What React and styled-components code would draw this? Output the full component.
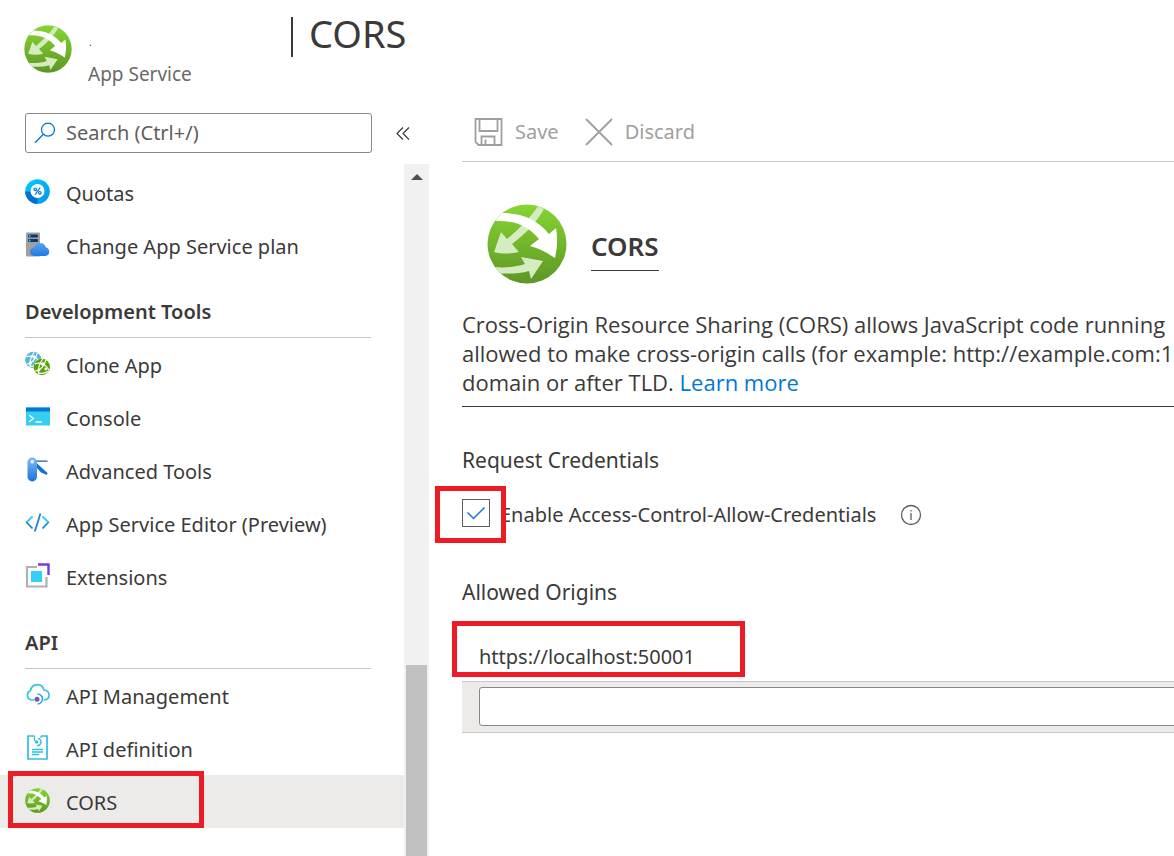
import React from "react";
import styled, { createGlobalStyle } from "styled-components";

const ink = "#3b3a39";
const accent = "#0078d4";
const callout = "#ed1c24";

const GlobalStyle = createGlobalStyle`
  * { box-sizing: border-box; }
  body {
    margin: 0;
    background: #fff;
    color: ${ink};
    font-family: "Noto Sans", "Open Sans", sans-serif;
    font-size: 20px;
    line-height: 28px;
  }
  button, input { font: inherit; color: inherit; }
`;

const Shell = styled.div`
  display: flex;
  flex-direction: column;
  height: 100vh;
  overflow: hidden;
`;

const Header = styled.header`
  display: flex;
  flex: none;
  height: 100px;
  padding: 8px 24px 0;
`;

const HeaderIcon = styled.div`
  padding-top: 17px;
  width: 64px;
`;

const ResourceName = styled.div`
  display: flex;
  flex-direction: column;
  justify-content: flex-end;
  width: 203px;
  padding-bottom: 14px;
`;

const ResourceDot = styled.span`
  height: 24px;
  padding-left: 1px;
  font-size: 10px;
  line-height: 8px;
`;

const ResourceType = styled.span`
  color: #6b6967;
  font-size: 19px;
  line-height: 24px;
`;

const PageTitle = styled.h1`
  display: flex;
  align-items: center;
  gap: 16px;
  height: 50px;
  margin: 0;
  font-size: 38px;
  line-height: 50px;
  font-weight: 400;
  white-space: nowrap;
  &::before {
    content: "";
    width: 2px;
    height: 40px;
    margin-top: 8px;
    background: ${ink};
  }
`;

const Body = styled.div`
  display: flex;
  flex: 1;
  min-height: 0;
`;

const Sidebar = styled.aside`
  display: flex;
  flex-direction: column;
  flex: none;
  width: 429px;
`;

const SearchRow = styled.div`
  display: flex;
  align-items: center;
  flex: none;
  height: 64px;
  padding: 2px 14px 0 25px;
`;

const SearchBox = styled.label`
  display: flex;
  align-items: center;
  gap: 10px;
  flex: 1;
  height: 40px;
  padding: 0 8px;
  border: 1px solid #8a8886;
  border-radius: 3px;
`;

const SearchInput = styled.input`
  flex: 1;
  min-width: 0;
  padding: 0;
  border: 0;
  outline: 0;
  background: transparent;
  &::placeholder { color: #605e5c; opacity: 1; }
`;

const CollapseButton = styled.button`
  display: flex;
  justify-content: center;
  width: 24px;
  margin-left: 19px;
  padding: 0;
  border: 0;
  background: none;
`;

const NavArea = styled.div`
  display: flex;
  flex: 1;
  min-height: 0;
`;

const Nav = styled.nav`
  flex: 1;
  min-width: 0;
  padding-top: 2px;
`;

const NavHeading = styled.h2`
  display: flex;
  align-items: flex-end;
  height: 66px;
  margin: 0 33px 0 25px;
  padding-bottom: 11px;
  border-bottom: 1px solid #c8c6c4;
  font-size: 20px;
  line-height: 28px;
  font-weight: 600;
`;

const NavLink = styled.a`
  position: relative;
  display: flex;
  align-items: center;
  gap: 16px;
  height: 53px;
  padding: 0 0 2px 25px;
  background: ${(p) => (p.$active ? "#edebe9" : "transparent")};
  color: ${ink};
  text-decoration: none;
  white-space: nowrap;
`;

const Label = styled.span`
  padding-top: 4px;
`;

const ScrollTrack = styled.div`
  display: flex;
  flex-direction: column;
  justify-content: space-between;
  align-items: center;
  width: 25px;
  padding-top: 10px;
  background: #f1f1f1;
`;

const ScrollThumb = styled.div`
  width: 21px;
  height: 28%;
  background: #c1c1c1;
`;

const Main = styled.main`
  flex: 1;
  min-width: 0;
  padding-left: 33px;
  overflow: hidden;
`;

const Toolbar = styled.div`
  display: flex;
  align-items: center;
  gap: 26px;
  height: 62px;
  padding: 3px 12px 0;
  border-bottom: 1px solid #c8c6c4;
`;

const ToolButton = styled.button`
  display: flex;
  align-items: center;
  gap: 12px;
  padding: 0;
  border: 0;
  background: none;
  color: #a19f9d;
`;

const SectionHead = styled.div`
  display: flex;
  align-items: center;
  gap: 24px;
  height: 148px;
  padding: 15px 25px 0;
`;

const SectionTitle = styled.h2`
  margin: 12px 0 0;
  padding-bottom: 6px;
  border-bottom: 1px solid ${ink};
  font-size: 26px;
  line-height: 36px;
  font-weight: 600;
`;

const Intro = styled.p`
  margin: 0;
  padding-bottom: 9px;
  border-bottom: 1px solid ${ink};
  font-family: "Open Sans", "Noto Sans", sans-serif;
  font-size: 22px;
  line-height: 29px;
  white-space: nowrap;
`;

const IntroLink = styled.a`
  color: ${accent};
  text-decoration: none;
`;

const FieldTitle = styled.h3`
  margin: 0;
  font-size: 21px;
  line-height: 28px;
  font-weight: 400;
`;

const Credentials = styled.section`
  padding-top: 39px;
`;

const CheckRow = styled.div`
  position: relative;
  display: flex;
  align-items: center;
  height: 28px;
  margin-top: 25px;
`;

const CheckLabel = styled.label`
  display: flex;
  align-items: center;
  gap: 10px;
  white-space: nowrap;
`;

const CheckBox = styled.span`
  position: relative;
  display: flex;
  width: 28px;
  height: 28px;
  svg { position: absolute; left: 0; top: 0; pointer-events: none; }
`;

const CheckInput = styled.input`
  appearance: none;
  width: 28px;
  height: 28px;
  margin: 0;
  border: 1px solid #605e5c;
  &:not(:checked) + svg { display: none; }
`;

const InfoButton = styled.button`
  display: flex;
  margin-left: 24px;
  padding: 3px 0 0;
  border: 0;
  background: none;
`;

const Origins = styled.section`
  padding-top: 51px;
`;

const OriginRow = styled.div`
  position: relative;
  height: 75px;
  padding: 37px 17px 0;
`;

const OriginEntry = styled.div`
  height: 52px;
  padding: 5px 0 6px 17px;
  border-top: 1px solid #c8c6c4;
  border-bottom: 1px solid #c8c6c4;
  background: #edebe9;
`;

const OriginInput = styled.input`
  display: block;
  width: calc(100% + 4px);
  height: 39px;
  padding: 0 10px;
  border: 1px solid #8a8886;
  border-radius: 3px;
  background: #fff;
`;

const Callout = styled.span`
  position: absolute;
  left: ${(p) => p.$left}px;
  top: ${(p) => p.$top}px;
  width: ${(p) => p.$width}px;
  height: ${(p) => p.$height}px;
  border: 5px solid ${callout};
  pointer-events: none;
`;

function CorsIcon({ size, id }) {
  return (
    <svg width={size} height={size} viewBox="0 0 80 80" aria-hidden="true">
      <defs>
        <linearGradient id={id} x1="0" y1="0" x2="0" y2="1">
          <stop offset="0" stopColor="#86d633" />
          <stop offset="1" stopColor="#5e9624" />
        </linearGradient>
        <clipPath id={id + "c"}><circle cx="40" cy="40" r="39.5" /></clipPath>
      </defs>
      <circle cx="40" cy="40" r="39.5" fill={`url(#${id})`} />
      <g clipPath={`url(#${id}c)`}>
        <path d="M51 2 57 5C50 17 40 29 25 40L32 48C24 50 15 50 7 48L14 28 20 35C32 25 43 14 52 1Z" fill="#d5ebc0" />
        <path d="M7 63C19 64 29 63 38 60L34 53 56 57 44 75 42 67C32 70 19 70 8 69Z" fill="#d5ebc0" />
        <path d="M15 9C34 9 50 15 62 30L69 24C71 35 70 45 68 54 60 49 52 44 43 42L52 35C41 22 28 16 8 17Z" fill="#fff" />
      </g>
    </svg>
  );
}

function SearchIcon() {
  return (
    <svg width="22" height="22" viewBox="0 0 22 22" fill="none" stroke={accent} strokeWidth="1.3" aria-hidden="true">
      <circle cx="14" cy="7.700" r="6.500" />
      <path d="M9.300 12.300 1 20.800" />
    </svg>
  );
}

function ChevronsIcon() {
  return (
    <svg width="14" height="14" viewBox="0 0 14 14" fill="none" stroke={ink} strokeWidth="1.2" aria-hidden="true">
      <path d="M7 1.500 1 7.500l6 6M13 1.500 7 7.500l6 6" />
    </svg>
  );
}

function QuotaIcon() {
  return (
    <svg width="25" height="25" viewBox="0 0 25 25" aria-hidden="true">
      <defs>
        <linearGradient id="quota" x1="0" y1="0" x2="1" y2="1">
          <stop offset="0" stopColor="#00cfff" />
          <stop offset="1" stopColor="#0093ea" />
        </linearGradient>
      </defs>
      <circle cx="12.5" cy="12.5" r="12.3" fill="url(#quota)" />
      <path d="M.2 12.5A12.3 12.3 0 0 0 12.5 24.800V12.500Z" fill="#0072d0" />
      <circle cx="12.5" cy="12" r="7" fill="#fff" />
      <g fill="none" stroke="#0078d4" strokeWidth="1.2">
        <path d="M15.200 8.500 10 15.700" />
        <circle cx="10.300" cy="10.300" r="1.300" />
        <circle cx="14.800" cy="13.800" r="1.300" />
      </g>
    </svg>
  );
}

function PlanIcon() {
  return (
    <svg width="25" height="25" viewBox="0 0 25 25" aria-hidden="true">
      <defs>
        <linearGradient id="cloud" x1="0" y1="0" x2="0" y2="1">
          <stop offset="0" stopColor="#5ba0f5" />
          <stop offset="1" stopColor="#1c7be0" />
        </linearGradient>
      </defs>
      <rect x="1" y="0.500" width="14" height="24" rx="0.800" fill="#a0a0a0" />
      <rect x="3" y="2.500" width="10" height="3" rx="1" fill="#063a6b" />
      <rect x="3" y="7" width="10" height="3" rx="1" fill="#063a6b" />
      <circle cx="4.700" cy="4" r="0.900" fill="#32d4f5" />
      <circle cx="4.700" cy="8.500" r="0.900" fill="#32d4f5" />
      <path d="M9.500 24a4.300 4.300 0 0 1-.3-8.600 6.200 6.200 0 0 1 11.800 0 4.400 4.400 0 0 1-.5 8.600Z" fill="url(#cloud)" />
    </svg>
  );
}

function MiniGlobe({ cx, cy, color }) {
  return (
    <g transform={`translate(${cx} ${cy})`}>
      <circle r="8.200" fill={color} />
      <g fill="none" stroke="#fff" strokeWidth="1.200">
        <path d="M-7-3C-2-5 4-3 7 3M4-7C3-1-2 4-7 4M-3 7.500C-4 2-2-4 1-8M-4 6C0 7 4 6 7 4" />
      </g>
      <circle cx="1" cy="-3" r="1.800" fill="#fff" />
      <circle cx="-3" cy="3" r="1.600" fill="#fff" />
      <circle cx="4" cy="2" r="1.400" fill="#fff" />
    </g>
  );
}

function CloneIcon() {
  return (
    <svg width="25" height="25" viewBox="0 0 25 25" aria-hidden="true">
      <MiniGlobe cx={8.3} cy={9} color="#59b4d9" />
      <circle cx="16.800" cy="16" r="8.600" fill="#fff" />
      <MiniGlobe cx={16.800} cy={16} color="#57a300" />
    </svg>
  );
}

function ConsoleIcon() {
  return (
    <svg width="25" height="25" viewBox="0 0 25 25" aria-hidden="true">
      <rect x="1" y="3.500" width="24" height="18" fill="#35cdf0" />
      <rect x="1" y="3.500" width="24" height="4" fill="#0078d4" />
      <path d="M4 11l4.500 3.500L4 18M10.500 18H17" fill="none" stroke="#fff" strokeWidth="1.300" />
    </svg>
  );
}

function ToolsIcon() {
  return (
    <svg width="25" height="25" viewBox="0 0 25 25" aria-hidden="true">
      <defs>
        <linearGradient id="knife" x1="0" y1="0" x2="0" y2="1">
          <stop offset="0" stopColor="#7db8f5" />
          <stop offset="1" stopColor="#1b74d8" />
        </linearGradient>
      </defs>
      <path d="M9 3.500H22.500V4.800H10Z" fill="#0f5fae" />
      <path d="M11 5.500 22.500 16 22 18 16 15.500 11 10Z" fill="#1272d4" />
      <rect x="2.500" y="0.500" width="9.500" height="24" rx="4.700" fill="url(#knife)" />
      <circle cx="7.300" cy="4.700" r="1.900" fill="#e3f0fd" />
    </svg>
  );
}

function CodeIcon() {
  return (
    <svg width="25" height="25" viewBox="0 0 25 25" fill="none" strokeWidth="1.800" aria-hidden="true">
      <path d="M7.500 6.500 1.300 12.500" stroke="#32cdee" />
      <path d="M1.300 12 7.500 18.500M23.700 12 17.500 18.500" stroke="#1583dc" />
      <path d="M17.500 6.500 23.700 12.500" stroke="#32cdee" />
      <path d="M15.500 3.500 9.800 21.500" stroke="#1d7fe0" />
    </svg>
  );
}

function ExtensionIcon() {
  return (
    <svg width="25" height="25" viewBox="0 0 25 25" fill="none" aria-hidden="true">
      <path d="M12 4H2V23.500H21.500V14" stroke="#b0b0b0" strokeWidth="2.200" />
      <rect x="6" y="8" width="11" height="11" fill="#32d0f2" />
      <path d="M13 1.500H23.500V12" stroke="#773adc" strokeWidth="2.400" />
    </svg>
  );
}

function ApiCloudIcon() {
  return (
    <svg width="25" height="25" viewBox="0 0 25 25" fill="none" aria-hidden="true">
      <path d="M9 18H6.500A5 5 0 0 1 5.500 8.500C7 1 17 0.500 19 8 25.500 8.500 26 17.500 19 18" stroke="#32c4e4" strokeWidth="1.700" />
      <path d="M12.500 12a5 5 0 1 1 0 10" stroke="#2aa8dc" strokeWidth="1.600" />
      <circle cx="12" cy="17.300" r="2.500" fill="#7a4fc0" />
    </svg>
  );
}

function ApiDefinitionIcon() {
  return (
    <svg width="25" height="25" viewBox="0 0 25 25" fill="none" stroke="#32bedd" aria-hidden="true">
      <path d="M9.500 1H3V24H22V1H16" strokeWidth="1.700" />
      <path d="M9.500 1V6M16 1V3" strokeWidth="1.200" />
      <path d="M13 3.500a3.500 3.500 0 1 1-1 7" strokeWidth="1.500" />
      <circle cx="11.500" cy="7" r="1.700" fill="#32bedd" stroke="none" />
      <path d="M7 14.500H18M7 17H18M7 19.500H14" strokeWidth="1.300" />
    </svg>
  );
}

function SaveIcon() {
  return (
    <svg width="29" height="28" viewBox="0 0 29 28" fill="none" stroke="#a19f9d" strokeWidth="1.800" aria-hidden="true">
      <path d="M1.500 1H27.500V27H4.500L1.500 24Z" />
      <path d="M5.500 1V13H23.500V1M7.500 27V18.500H20.500V27M11.500 21.500V27" />
    </svg>
  );
}

function DiscardIcon() {
  return (
    <svg width="28" height="28" viewBox="0 0 28 28" stroke="#a19f9d" strokeWidth="1.800" aria-hidden="true">
      <path d="M1 1 27 27M27 1 1 27" />
    </svg>
  );
}

function InfoIcon() {
  return (
    <svg width="22" height="22" viewBox="0 0 22 22" fill="none" stroke="#605e5c" strokeWidth="1.300" aria-hidden="true">
      <circle cx="11" cy="11" r="9.500" />
      <path d="M11 9V16M11 6V7.500" />
    </svg>
  );
}

function NavItem({ icon, children, active }) {
  return (
    <NavLink href="#" $active={active} aria-current={active ? "page" : undefined}>
      {icon}
      <Label>{children}</Label>
      {active && <Callout $left={8} $top={-4} $width={196} $height={57} />}
    </NavLink>
  );
}

export default function App() {
  return (
    <>
      <GlobalStyle />
      <Shell>
        <Header>
          <HeaderIcon><CorsIcon size={48} id="corsHeader" /></HeaderIcon>
          <ResourceName>
            <ResourceDot>.</ResourceDot>
            <ResourceType>App Service</ResourceType>
          </ResourceName>
          <PageTitle>CORS</PageTitle>
        </Header>
        <Body>
          <Sidebar>
            <SearchRow>
              <SearchBox>
                <SearchIcon />
                <SearchInput type="search" placeholder="Search (Ctrl+/)" aria-label="Search" />
              </SearchBox>
              <CollapseButton aria-label="Collapse menu"><ChevronsIcon /></CollapseButton>
            </SearchRow>
            <NavArea>
              <Nav>
                <NavItem icon={<QuotaIcon />}>Quotas</NavItem>
                <NavItem icon={<PlanIcon />}>Change App Service plan</NavItem>
                <NavHeading>Development Tools</NavHeading>
                <NavItem icon={<CloneIcon />}>Clone App</NavItem>
                <NavItem icon={<ConsoleIcon />}>Console</NavItem>
                <NavItem icon={<ToolsIcon />}>Advanced Tools</NavItem>
                <NavItem icon={<CodeIcon />}>App Service Editor (Preview)</NavItem>
                <NavItem icon={<ExtensionIcon />}>Extensions</NavItem>
                <NavHeading>API</NavHeading>
                <NavItem icon={<ApiCloudIcon />}>API Management</NavItem>
                <NavItem icon={<ApiDefinitionIcon />}>API definition</NavItem>
                <NavItem icon={<CorsIcon size={25} id="corsNav" />} active>CORS</NavItem>
              </Nav>
              <ScrollTrack aria-hidden="true">
                <svg width="12" height="6" viewBox="0 0 12 6"><path d="M0 6 6 0l6 6Z" fill="#505050" /></svg>
                <ScrollThumb />
              </ScrollTrack>
            </NavArea>
          </Sidebar>
          <Main>
            <Toolbar>
              <ToolButton><SaveIcon />Save</ToolButton>
              <ToolButton><DiscardIcon />Discard</ToolButton>
            </Toolbar>
            <SectionHead>
              <CorsIcon size={80} id="corsMain" />
              <SectionTitle>CORS</SectionTitle>
            </SectionHead>
            <Intro>
              Cross-Origin Resource Sharing (CORS) allows JavaScript code running
              <br />
              allowed to make cross-origin calls (for example: http://example.com:12
              <br />
              domain or after TLD. <IntroLink href="#">Learn more</IntroLink>
            </Intro>
            <Credentials>
              <FieldTitle>Request Credentials</FieldTitle>
              <CheckRow>
                <CheckLabel>
                  <CheckBox>
                    <CheckInput type="checkbox" defaultChecked />
                    <svg width="28" height="28" viewBox="0 0 28 28" fill="none" stroke="#1a73e0" strokeWidth="1.500">
                      <path d="M5.500 13.500 11.500 19.500 22.500 8.500" />
                    </svg>
                  </CheckBox>
                  <Label>Enable Access-Control-Allow-Credentials</Label>
                </CheckLabel>
                <InfoButton aria-label="More information"><InfoIcon /></InfoButton>
                <Callout $left={-27} $top={-13} $width={71} $height={57} />
              </CheckRow>
            </Credentials>
            <Origins>
              <FieldTitle>Allowed Origins</FieldTitle>
              <OriginRow>
                https://localhost:50001
                <Callout $left={-10} $top={15} $width={293} $height={56} />
              </OriginRow>
              <OriginEntry>
                <OriginInput type="text" aria-label="New allowed origin" />
              </OriginEntry>
            </Origins>
          </Main>
        </Body>
      </Shell>
    </>
  );
}
